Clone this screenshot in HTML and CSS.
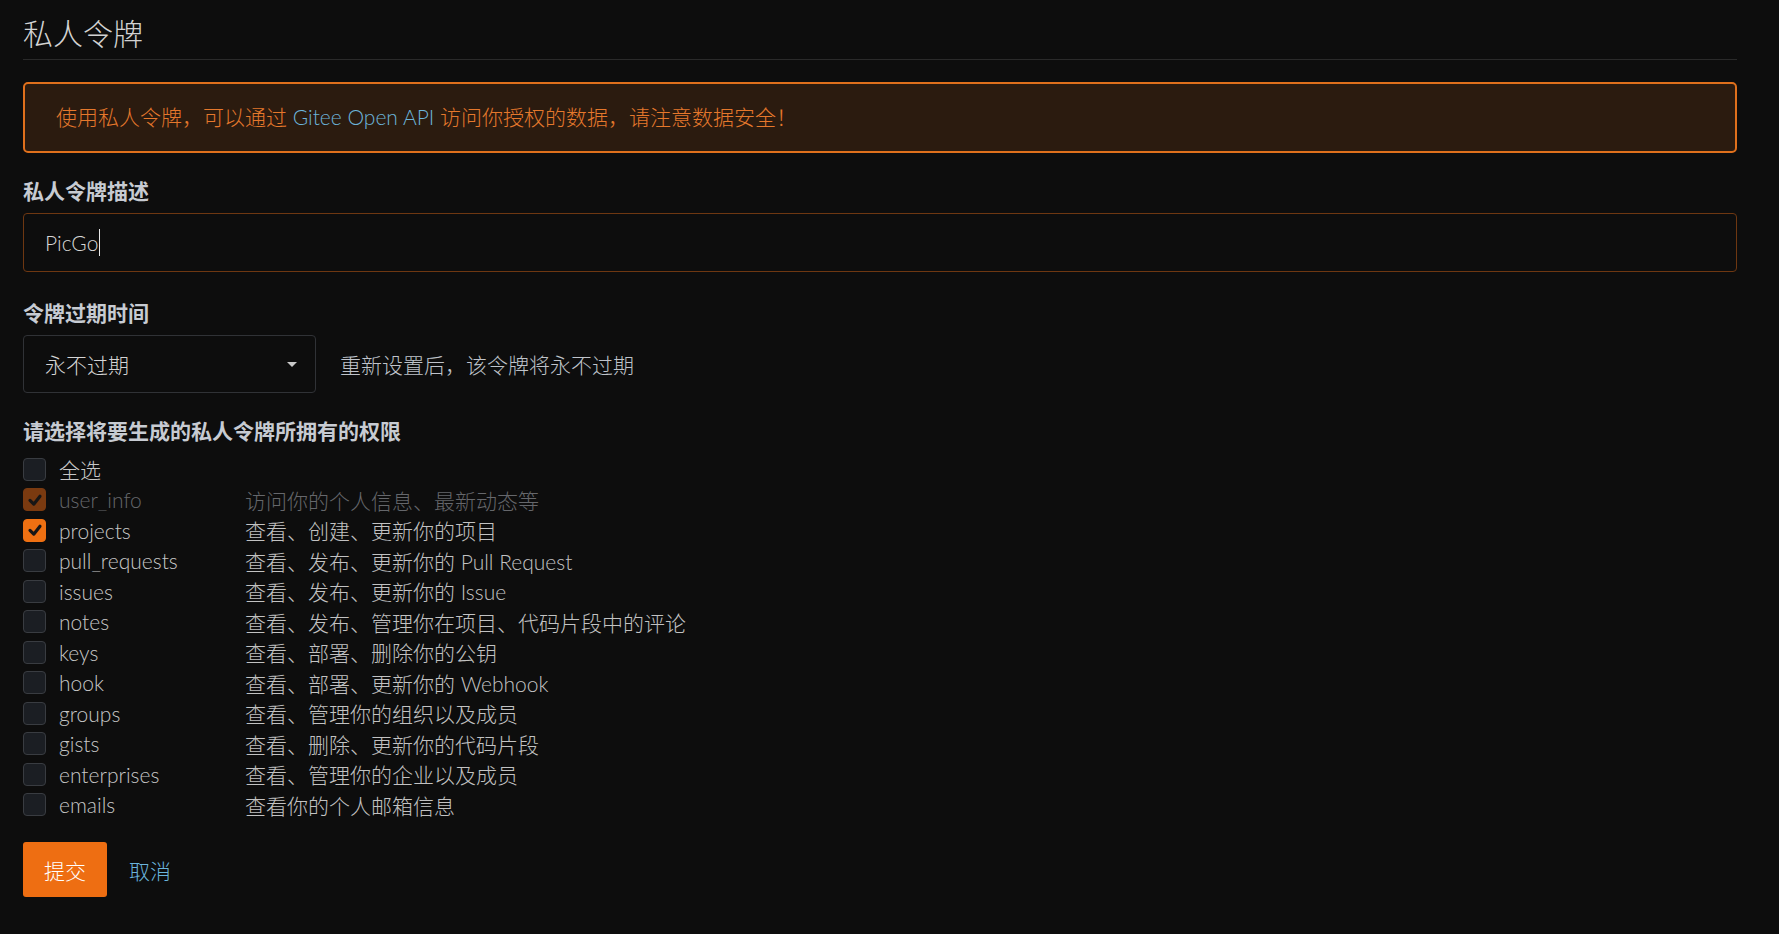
FILE: index.html
```html
<!DOCTYPE html>
<html lang="zh-CN">
<head>
    <meta charset="UTF-8">
    <title>私人令牌</title>
    <link rel="stylesheet" href="styles.css">
</head>
<body>

    <div class="page">
        <!-- Header -->
        <h1 class="page-title">私人令牌</h1>

        <!-- Notice -->
        <div class="notice">
            使用私人令牌，可以通过 <a href="#">Gitee Open API</a> 访问你授权的数据，请注意数据安全！
        </div>

        <form class="token-form">
            <!-- Description -->
            <label class="field-label">私人令牌描述</label>
            <div class="text-input"><span>PicGo</span><span class="caret"></span></div>

            <!-- Expiry -->
            <label class="field-label after-input">令牌过期时间</label>
            <div class="expire-row">
                <div class="select">
                    <span>永不过期</span>
                    <span class="select-arrow"></span>
                </div>
                <span class="hint">重新设置后，该令牌将永不过期</span>
            </div>

            <!-- Scopes -->
            <label class="field-label">请选择将要生成的私人令牌所拥有的权限</label>
            <ul class="scopes">
                <li class="scope"><span class="checkbox"></span><span class="scope-name">全选</span></li>
                <li class="scope disabled"><span class="checkbox checked"><svg viewBox="0 0 24 24"><polyline points="6,12.5 10.5,17 18,7.5"/></svg></span><span class="scope-name">user_info</span><span class="scope-desc">访问你的个人信息、最新动态等</span></li>
                <li class="scope"><span class="checkbox checked"><svg viewBox="0 0 24 24"><polyline points="6,12.5 10.5,17 18,7.5"/></svg></span><span class="scope-name">projects</span><span class="scope-desc">查看、创建、更新你的项目</span></li>
                <li class="scope"><span class="checkbox"></span><span class="scope-name">pull_requests</span><span class="scope-desc">查看、发布、更新你的 Pull Request</span></li>
                <li class="scope"><span class="checkbox"></span><span class="scope-name">issues</span><span class="scope-desc">查看、发布、更新你的 Issue</span></li>
                <li class="scope"><span class="checkbox"></span><span class="scope-name">notes</span><span class="scope-desc">查看、发布、管理你在项目、代码片段中的评论</span></li>
                <li class="scope"><span class="checkbox"></span><span class="scope-name">keys</span><span class="scope-desc">查看、部署、删除你的公钥</span></li>
                <li class="scope"><span class="checkbox"></span><span class="scope-name">hook</span><span class="scope-desc">查看、部署、更新你的 Webhook</span></li>
                <li class="scope"><span class="checkbox"></span><span class="scope-name">groups</span><span class="scope-desc">查看、管理你的组织以及成员</span></li>
                <li class="scope"><span class="checkbox"></span><span class="scope-name">gists</span><span class="scope-desc">查看、删除、更新你的代码片段</span></li>
                <li class="scope"><span class="checkbox"></span><span class="scope-name">enterprises</span><span class="scope-desc">查看、管理你的企业以及成员</span></li>
                <li class="scope"><span class="checkbox"></span><span class="scope-name">emails</span><span class="scope-desc">查看你的个人邮箱信息</span></li>
            </ul>

            <!-- Actions -->
            <div class="actions">
                <button type="button" class="btn-submit">提交</button>
                <a href="#" class="btn-cancel">取消</a>
            </div>
        </form>
    </div>

</body>
</html>
```

FILE: styles.css
```css
/* Global Styles */
* {
    margin: 0;
    padding: 0;
    box-sizing: border-box;
}
body {
    font-family: "Lato", "Noto Sans CJK SC", sans-serif;
    font-size: 21px;
    font-weight: 300;
    background: #0d0d0d;
    color: #c9c9c9;
}
a {
    text-decoration: none;
}

.page {
    padding: 0 42px 0 23px;
}

/* Header */
.page-title {
    font-size: 30px;
    font-weight: 300;
    line-height: 42px;
    color: #d2d2d2;
    padding: 12px 0 5px;
    border-bottom: 1px solid #2a2a2a;
}

/* Notice */
.notice {
    margin-top: 22px;
    padding: 17px 31px 19px;
    line-height: 31px;
    border: 2px solid #e0701c;
    border-radius: 5px;
    background: #2b1b0f;
    color: #e5782c;
}
.notice a {
    color: #6cb4da;
}

/* Form */
.token-form {
    display: flex;
    flex-direction: column;
    align-items: flex-start;
}
.field-label {
    font-weight: bold;
    line-height: 30px;
    color: #c7cbd2;
    margin-top: 23px;
    margin-bottom: 7px;
}
.field-label.after-input {
    margin-top: 26px;
}
.text-input {
    width: 100%;
    height: 59px;
    display: flex;
    align-items: center;
    padding-left: 21px;
    border: 1px solid #6e3711;
    border-radius: 4px;
    color: #d6d6d6;
}
.caret {
    width: 1px;
    height: 27px;
    margin-left: 1px;
    background: #e8e8e8;
}

.expire-row {
    display: flex;
    align-items: center;
    gap: 24px;
}
.select {
    width: 293px;
    height: 58px;
    display: flex;
    align-items: center;
    justify-content: space-between;
    padding: 0 18px 0 21px;
    border: 1px solid #303236;
    border-radius: 4px;
    color: #d4d4d4;
}
.select-arrow {
    width: 0;
    height: 0;
    border-left: 5px solid transparent;
    border-right: 5px solid transparent;
    border-top: 5px solid #c8c8c8;
}
.hint {
    color: #bfc3ca;
}

/* Scopes */
.scopes {
    list-style: none;
    margin-top: 1px;
}
.scope {
    height: 30.5px;
    display: flex;
    align-items: center;
}
.checkbox {
    width: 23px;
    height: 23px;
    margin-right: 13px;
    border: 1px solid #393c41;
    border-radius: 4px;
    background: #1b1e23;
    display: flex;
    align-items: center;
    justify-content: center;
}
.checkbox.checked {
    background: #ee7012;
    border-color: #ee7012;
}
.checkbox svg {
    width: 20px;
    height: 20px;
    fill: none;
    stroke: #161616;
    stroke-width: 3.8;
    stroke-linecap: round;
    stroke-linejoin: round;
}
.scope-name {
    width: 186px;
    color: #c6c6c6;
}
.scope-desc {
    color: #c2c2c2;
}
.scope.disabled .checkbox {
    background: #7a3a10;
    border-color: #7a3a10;
}
.scope.disabled .scope-name,
.scope.disabled .scope-desc {
    color: #65676b;
}

/* Actions */
.actions {
    margin-top: 22px;
    display: flex;
    align-items: center;
    gap: 22px;
}
.btn-submit {
    width: 84px;
    height: 55px;
    border: none;
    border-radius: 3px;
    background: #ee6e12;
    color: #fff;
    font-family: inherit;
    font-size: 21px;
    font-weight: 300;
}
.btn-cancel {
    color: #6ab4dc;
}
```
